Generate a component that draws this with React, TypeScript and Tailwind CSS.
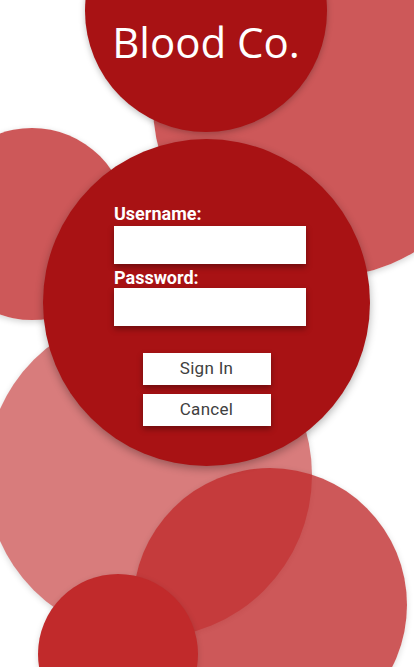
import React from "react";

export default function App() {
  return (
    <div className="relative w-[414px] h-[667px] overflow-hidden bg-white">
      {/* decorative circles on a free canvas */}
      <div className="absolute left-[153px] top-[-67px] w-[344px] h-[344px] rounded-full bg-[rgba(191,41,42,0.78)] shadow-[0_2px_6px_rgba(0,0,0,0.18)]" />
      <div className="absolute left-[-64px] top-[128px] w-[192px] h-[192px] rounded-full bg-[rgba(191,41,42,0.78)] shadow-[0_2px_6px_rgba(0,0,0,0.18)]" />
      <div className="absolute left-[-14px] top-[312px] w-[326px] h-[326px] rounded-full bg-[#d87c7c] shadow-[0_2px_6px_rgba(0,0,0,0.15)]" />
      <div className="absolute left-[133px] top-[468px] w-[274px] h-[274px] rounded-full bg-[rgba(191,41,42,0.78)] shadow-[0_2px_6px_rgba(0,0,0,0.15)]" />
      <div className="absolute left-[38px] top-[574px] w-[160px] h-[160px] rounded-full bg-[#c12a2b] shadow-[0_2px_6px_rgba(0,0,0,0.15)]" />

      {/* logo circle */}
      <div className="absolute left-[85px] top-[-110px] w-[242px] h-[242px] rounded-full bg-[#a81214] shadow-[0_2px_6px_rgba(0,0,0,0.25)] flex flex-col items-center justify-end pb-[69px]">
        <h1 className="text-white text-[42px] leading-none font-normal [font-family:'Open_Sans',sans-serif]">
          Blood Co.
        </h1>
      </div>

      {/* login circle */}
      <form className="absolute left-[43px] top-[139px] w-[327px] h-[327px] rounded-full bg-[#a81214] shadow-[0_3px_8px_rgba(0,0,0,0.3)] flex flex-col items-center pt-[64px] [font-family:Roboto,sans-serif]">
        <div className="flex flex-col w-[192px] ml-[7px]">
          <label className="text-white text-[18px] font-bold leading-[22px] h-[23px]">Username:</label>
          <input className="h-[38px] w-full bg-white shadow-[0_3px_6px_rgba(0,0,0,0.35)] outline-none" />
          <label className="mt-[3px] text-white text-[18px] font-bold leading-[22px] h-[21px]">Password:</label>
          <input type="password" className="h-[38px] w-full bg-white shadow-[0_3px_6px_rgba(0,0,0,0.35)] outline-none" />
        </div>
        <div className="flex flex-col items-center gap-[9px] mt-[27px]">
          <button type="button" className="w-[128px] h-[32px] bg-white text-[#404040] text-[17px] font-normal tracking-[0.3px] shadow-[0_3px_6px_rgba(0,0,0,0.35)]">
            Sign In
          </button>
          <button type="button" className="w-[128px] h-[32px] bg-white text-[#404040] text-[17px] font-normal tracking-[0.3px] shadow-[0_3px_6px_rgba(0,0,0,0.35)]">
            Cancel
          </button>
        </div>
      </form>
    </div>
  );
}
